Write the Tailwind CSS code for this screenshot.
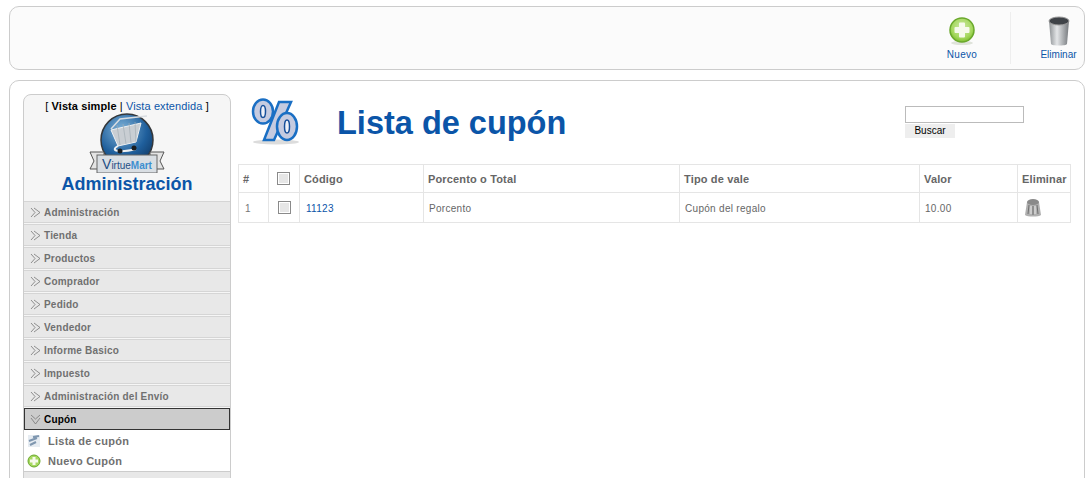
<!DOCTYPE html>
<html lang="es">
<head>
  <meta charset="UTF-8">
  <title>Lista de cupón</title>
  <script src="https://cdn.jsdelivr.net/npm/@tailwindcss/browser@4"></script>
</head>
<body class="bg-white h-[478px] overflow-hidden font-['Liberation_Sans',Arial,sans-serif] text-[11px] text-[#666]">
  <!-- toolbar -->
  <div class="ml-[9px] mt-[6px] w-[1076px] h-[64px] border border-[#ccc] rounded-[10px] bg-[#fbfbfb] flex justify-end pt-[5px]">
    <a class="w-[96px] h-[52px] flex flex-col items-center text-[#0b55a8] text-[10px] tracking-[0.3px]">
      <svg width="30" height="30" viewBox="0 0 30 30" class="mt-[4px]">
        <defs>
          <radialGradient id="plusbg" cx=".5" cy=".4" r=".6">
            <stop offset="0" stop-color="#cfeaa8"/>
            <stop offset=".7" stop-color="#a6d860"/>
            <stop offset="1" stop-color="#7fc02e"/>
          </radialGradient>
        </defs>
        <ellipse cx="15" cy="27" rx="11" ry="2" fill="#dfe3da"/>
        <circle cx="15" cy="14" r="12" fill="url(#plusbg)" stroke="#6aa82c" stroke-width="1.5"/>
        <path d="M12 7.5q0-1 1-1h4q1 0 1 1V11h3.500q1 0 1 1v4q0 1-1 1H18v3.500q0 1-1 1h-4q-1 0-1-1V17H8.500q-1 0-1-1v-4q0-1 1-1H12z" fill="#f6faec"/>
      </svg>
      <span class="mt-[2px] leading-[13px]">Nuevo</span>
    </a>
    <a class="w-[74px] h-[52px] border-l border-[#eee] flex flex-col items-center text-[#0b55a8] text-[10px] pl-[22px] pt-[4px]">
      <svg width="24" height="31" viewBox="0 0 24 31">
        <defs>
          <linearGradient id="can" x1="0" x2="1" y1="0" y2="0">
            <stop offset="0" stop-color="#8d9194"/>
            <stop offset=".4" stop-color="#e4e6e8"/>
            <stop offset="1" stop-color="#74787c"/>
          </linearGradient>
        </defs>
        <path d="M2 5l2 23c1 2 15 2 16 0l2-23z" fill="url(#can)"/>
        <ellipse cx="12" cy="5" rx="10" ry="4" fill="#3f4348" stroke="#999"/>
      </svg>
      <span class="leading-[13px] mt-[1px] whitespace-nowrap">Eliminar</span>
    </a>
  </div>

  <!-- main box -->
  <div class="ml-[9px] mt-[10px] w-[1076px] h-[420px] border border-[#ccc] rounded-[10px] bg-white flex pt-[13px] pl-[13px]">
    <!-- sidebar -->
    <div class="w-[208px] h-[400px] shrink-0 border border-[#ccc] rounded-t-[8px] bg-[#f6f6f6]">
      <div class="text-center text-[11px] tracking-[0.1px] text-black leading-[13px] mt-[5px]">[ <b>Vista simple</b> | <span class="text-[#0b55a8]">Vista extendida</span> ]</div>
      <div class="flex justify-center h-[60px]">
        <svg width="76" height="60" viewBox="0 0 76 60">
          <defs>
            <radialGradient id="globe" cx=".4" cy=".3" r=".8">
              <stop offset="0" stop-color="#7fb2d8"/>
              <stop offset=".6" stop-color="#1f5f9c"/>
              <stop offset="1" stop-color="#0e3560"/>
            </radialGradient>
          </defs>
          <circle cx="38" cy="27" r="26" fill="url(#globe)" stroke="#33373b" stroke-width="1.500"/>
          <path d="M22 16L31 6 58 3" fill="none" stroke="#d8dde2" stroke-width="1.500"/>
          <path d="M22 17l30-7-5 19-18 4z" fill="#c9ced3" stroke="#eef0f2"/>
          <path d="M28 12l3 20M34 11l3 20M40 10l2 20M46 9l1 20" stroke="#a4adb5" stroke-width=".7" fill="none"/>
          <path d="M29 33c-9 5 2 7 18 3" fill="none" stroke="#eef0f2" stroke-width="2"/>
          <circle cx="31" cy="38" r="2.500" fill="#1a1d20"/>
          <circle cx="45" cy="35" r="2.500" fill="#1a1d20"/>
          <path d="M1 39h14v17H1l4-8z" fill="#e4e4e4" stroke="#555"/>
          <path d="M75 39H61v17h14l-4-8z" fill="#e4e4e4" stroke="#555"/>
          <rect x="8" y="42" width="60" height="18" fill="#d9dee3" stroke="#666"/>
          <text x="38" y="55.500" text-anchor="middle" font-size="10" font-family="Liberation Sans" fill="#1f4e85"><tspan font-size="14">V</tspan>irtue<tspan fill="#3d8fd0" font-weight="bold">Mart</tspan></text>
        </svg>
      </div>
      <h2 class="text-center text-[18px] leading-[21px] font-bold text-[#0b55a8] mt-[1px] mb-[6px]">Administración</h2>

      <nav class="flex flex-col gap-[1px] text-[10px] font-bold tracking-[0.2px] text-[#707070]">
        <a class="h-[22px] bg-[#e8e8e8] border-y border-[#d5d5d5] flex items-center pl-[6px] gap-[3px]"><svg width="11" height="11" viewBox="0 0 11 11" fill="none" stroke="#777" stroke-width=".8"><path d="M1 1l4 4.500-4 4.500M4 1l6 4.500-6 4.500"/></svg>Administración</a>
        <a class="h-[22px] bg-[#e8e8e8] border-y border-[#d5d5d5] flex items-center pl-[6px] gap-[3px]"><svg width="11" height="11" viewBox="0 0 11 11" fill="none" stroke="#777" stroke-width=".8"><path d="M1 1l4 4.500-4 4.500M4 1l6 4.500-6 4.500"/></svg>Tienda</a>
        <a class="h-[22px] bg-[#e8e8e8] border-y border-[#d5d5d5] flex items-center pl-[6px] gap-[3px]"><svg width="11" height="11" viewBox="0 0 11 11" fill="none" stroke="#777" stroke-width=".8"><path d="M1 1l4 4.500-4 4.500M4 1l6 4.500-6 4.500"/></svg>Productos</a>
        <a class="h-[22px] bg-[#e8e8e8] border-y border-[#d5d5d5] flex items-center pl-[6px] gap-[3px]"><svg width="11" height="11" viewBox="0 0 11 11" fill="none" stroke="#777" stroke-width=".8"><path d="M1 1l4 4.500-4 4.500M4 1l6 4.500-6 4.500"/></svg>Comprador</a>
        <a class="h-[22px] bg-[#e8e8e8] border-y border-[#d5d5d5] flex items-center pl-[6px] gap-[3px]"><svg width="11" height="11" viewBox="0 0 11 11" fill="none" stroke="#777" stroke-width=".8"><path d="M1 1l4 4.500-4 4.500M4 1l6 4.500-6 4.500"/></svg>Pedido</a>
        <a class="h-[22px] bg-[#e8e8e8] border-y border-[#d5d5d5] flex items-center pl-[6px] gap-[3px]"><svg width="11" height="11" viewBox="0 0 11 11" fill="none" stroke="#777" stroke-width=".8"><path d="M1 1l4 4.500-4 4.500M4 1l6 4.500-6 4.500"/></svg>Vendedor</a>
        <a class="h-[22px] bg-[#e8e8e8] border-y border-[#d5d5d5] flex items-center pl-[6px] gap-[3px]"><svg width="11" height="11" viewBox="0 0 11 11" fill="none" stroke="#777" stroke-width=".8"><path d="M1 1l4 4.500-4 4.500M4 1l6 4.500-6 4.500"/></svg>Informe Basico</a>
        <a class="h-[22px] bg-[#e8e8e8] border-y border-[#d5d5d5] flex items-center pl-[6px] gap-[3px]"><svg width="11" height="11" viewBox="0 0 11 11" fill="none" stroke="#777" stroke-width=".8"><path d="M1 1l4 4.500-4 4.500M4 1l6 4.500-6 4.500"/></svg>Impuesto</a>
        <a class="h-[22px] bg-[#e8e8e8] border-y border-[#d5d5d5] flex items-center pl-[6px] gap-[3px]"><svg width="11" height="11" viewBox="0 0 11 11" fill="none" stroke="#777" stroke-width=".8"><path d="M1 1l4 4.500-4 4.500M4 1l6 4.500-6 4.500"/></svg>Administración del Envío</a>
        <a class="h-[22px] bg-[#ccc] border border-[#333] flex items-center pl-[5px] gap-[3px] text-black"><svg width="11" height="11" viewBox="0 0 11 11" fill="none" stroke="#777" stroke-width=".8"><path d="M1 1l4.500 4 4.500-4M1 4l4.500 6 4.500-6"/></svg>Cupón</a>
      </nav>
      <div class="h-[42px] pt-[1px] bg-white border-b border-[#ccc] text-[11px] font-bold tracking-[0.25px] text-[#707070]">
        <div class="h-[20px] flex items-center pl-[3px] gap-[7px]">
          <svg width="14" height="14" viewBox="0 0 14 14"><rect x="1" y="1" width="12" height="12" fill="#e6ecf2"/><path d="M3 11l6-3M2 7l8-3M6 3l6-1" stroke="#7f97b0" stroke-width="2"/></svg>
          Lista de cupón
        </div>
        <div class="h-[20px] flex items-center pl-[3px] gap-[7px]">
          <svg width="14" height="14" viewBox="0 0 14 14"><circle cx="7" cy="7" r="6" fill="#a6d860" stroke="#6aa82c"/><path d="M5.500 3h3v2.500H11v3H8.500V11h-3V8.500H3v-3h2.500z" fill="#f6faec"/></svg>
          Nuevo Cupón
        </div>
      </div>
      <div class="h-[10px] bg-[#e8e8e8]"></div>
    </div>

    <!-- content -->
    <div class="ml-[7px] w-[833px] shrink-0">
      <div class="h-[70px] flex items-start">
        <svg width="52" height="50" viewBox="0 0 52 50" class="ml-[13px] mt-[2px] shrink-0">
          <ellipse cx="25" cy="46" rx="23" ry="2.500" fill="#dcdcdc"/>
          <g fill="#c5cbe0" stroke="#1a6fc4" stroke-width="2.500">
            <path d="M28 6h12L23 44H13z"/>
            <ellipse cx="12" cy="15.500" rx="10" ry="12"/>
            <ellipse cx="36" cy="30.500" rx="10" ry="13.500"/>
          </g>
          <ellipse cx="12" cy="15.500" rx="2.500" ry="6" fill="#eef1f8" stroke="#164f9a" stroke-width="1.500"/>
          <ellipse cx="36" cy="30.500" rx="2.500" ry="6.500" fill="#eef1f8" stroke="#164f9a" stroke-width="1.500"/>
        </svg>
        <h1 class="ml-[34px] mt-[9px] text-[32.500px] leading-[40px] font-bold text-[#0b55a8] whitespace-nowrap">Lista de cupón</h1>
        <div class="ml-auto mr-[47px] mt-[12px] w-[119px] shrink-0">
          <input type="text" class="block w-[119px] h-[17px] border border-[#bbb] bg-white">
          <button class="block mt-[1px] w-[50px] h-[14px] bg-[#eee] text-black text-[10px] leading-[14px]">Buscar</button>
        </div>
      </div>
      <table class="table-fixed border-collapse w-[832px] text-[10px] tracking-[0.3px]">
        <colgroup>
          <col class="w-[30px]"><col class="w-[31px]"><col class="w-[124px]"><col class="w-[256px]"><col class="w-[240px]"><col class="w-[98px]"><col class="w-[53px]">
        </colgroup>
        <thead>
          <tr class="h-[28px] text-[11px] font-bold tracking-[0.15px] text-[#666] text-left">
            <th class="border border-[#e5e5e5] pl-[4px] pt-[1px]">#</th>
            <th class="border border-[#e5e5e5] pl-[8px]"><input type="checkbox" class="block appearance-none w-[13px] h-[13px] border border-[#8a8a8a] bg-[#e6e6e6] shadow-[inset_0_0_0_1px_#fff]"></th>
            <th class="border border-[#e5e5e5] pl-[4px] pt-[1px]">Código</th>
            <th class="border border-[#e5e5e5] pl-[4px] pt-[1px]">Porcento o Total</th>
            <th class="border border-[#e5e5e5] pl-[4px] pt-[1px]">Tipo de vale</th>
            <th class="border border-[#e5e5e5] pl-[4px] pt-[1px]">Valor</th>
            <th class="border border-[#e5e5e5] pl-[4px] pt-[1px]">Eliminar</th>
          </tr>
        </thead>
        <tbody>
          <tr class="h-[30px]">
            <td class="border border-[#e5e5e5] pl-[6px] pt-[1px] text-[#777]">1</td>
            <td class="border border-[#e5e5e5] pl-[9px]"><input type="checkbox" class="block appearance-none w-[13px] h-[13px] border border-[#8a8a8a] bg-[#e6e6e6] shadow-[inset_0_0_0_1px_#fff]"></td>
            <td class="border border-[#e5e5e5] pl-[6px] pt-[1px] text-[#0b55a8]">11123</td>
            <td class="border border-[#e5e5e5] pl-[5px] pt-[1px]">Porcento</td>
            <td class="border border-[#e5e5e5] pl-[5px] pt-[1px]">Cupón del regalo</td>
            <td class="border border-[#e5e5e5] pl-[5px] pt-[1px]">10.00</td>
            <td class="border border-[#e5e5e5] pl-[6px]">
              <svg width="18" height="19" viewBox="0 0 18 19"><path d="M3 4l-2 13c2 2 14 2 16 0L15 4z" fill="#b0b0b0"/><ellipse cx="9" cy="4" rx="6" ry="3" fill="#8a8a8a"/><path d="M5 7l-1 9M9 8v9M13 7l1 9" stroke="#6f6f6f"/><path d="M7 8v8M11 8v8" stroke="#e8e8e8"/></svg>
            </td>
          </tr>
        </tbody>
      </table>
    </div>
  </div>
</body>
</html>
